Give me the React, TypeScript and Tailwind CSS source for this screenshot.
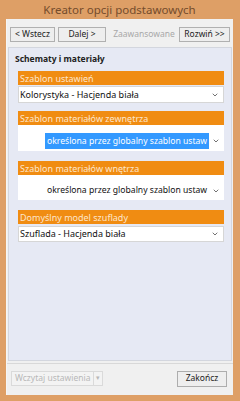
import { ChevronDown } from 'lucide-react'

const font = { fontFamily: '"Noto Sans", "Open Sans", sans-serif' }

function Header({ label }: { label: string }) {
  return (
    <div className="h-[14px] bg-[#f08c12] px-[2px] flex items-center text-[9px] leading-none text-[#fde6cc] whitespace-nowrap">
      {label}
    </div>
  )
}

function Chevron() {
  return <ChevronDown size={8} strokeWidth={2.5} className="text-[#555] shrink-0" />
}

export default function App() {
  return (
    <div className="w-[240px] h-[401px] bg-[#de9f66] flex flex-col pl-[6px] pr-[7px] pb-[6px]" style={font}>
      <div className="h-[19px] flex items-center justify-center text-[11.5px] text-[#744c2c]">
        Kreator opcji podstawowych
      </div>

      <div className="flex-1 bg-[#f0f0f0] flex flex-col border-l border-[#f6f6f6]">
        <div className="h-[28px] flex items-center px-[3px] pt-[2px] text-[8.5px] text-[#222] whitespace-nowrap">
          <button className="w-[45px] h-[15px] border border-[#b0b0b0] bg-[#eeeeee] leading-none">&lt; Wstecz</button>
          <button className="ml-[3px] w-[48px] h-[15px] border border-[#b0b0b0] bg-[#eeeeee] leading-none">Dalej &gt;</button>
          <span className="ml-[7px] w-[62px] text-center text-[#a8a8a8] leading-none">Zaawansowane</span>
          <button className="ml-[4px] w-[51px] h-[15px] border border-[#b0b0b0] bg-[#eeeeee] leading-none">Rozwiń &gt;&gt;</button>
        </div>

        <div className="flex-1 mx-[1px] bg-[#e6e9f4] border border-[#d3d6de] flex flex-col">
          <div className="h-[23px] flex items-center pl-[6px] text-[8.5px] font-bold text-[#222]">
            Schematy i materiały
          </div>

          <div className="ml-[9px] mr-[7px] flex flex-col">
            <Header label="Szablon ustawień" />
            <div className="mt-[1px] h-[17px] bg-white border border-[#d6d6d6] flex items-center pl-[1px] pr-[4px] text-[9px] text-[#111]">
              <span className="flex-1 whitespace-nowrap">Kolorystyka - Hacjenda biała</span>
              <Chevron />
            </div>

            <div className="mt-[8px]">
              <Header label="Szablon materiałów zewnętrza" />
              <div className="h-[26px] bg-white flex items-end pb-[2px] pr-[4px]">
                <div className="flex-1 flex items-center justify-end">
                  <span className="w-[164px] h-[16px] bg-[#3399ff] text-white text-[8.6px] flex items-center pl-[2px] whitespace-nowrap">
                    określona przez globalny szablon ustaw
                  </span>
                  <span className="ml-[3px]"><Chevron /></span>
                </div>
              </div>
            </div>

            <div className="mt-[10px]">
              <Header label="Szablon materiałów wnętrza" />
              <div className="h-[25px] bg-white flex items-end pb-[3px] pr-[4px]">
                <div className="flex-1 flex items-center justify-end text-[8.6px] text-[#111]">
                  <span className="w-[164px] pl-[2px] whitespace-nowrap">określona przez globalny szablon ustaw</span>
                  <span className="ml-[3px]"><Chevron /></span>
                </div>
              </div>
            </div>

            <div className="mt-[10px]">
              <Header label="Domyślny model szuflady" />
              <div className="mt-[2px] h-[16px] bg-white border border-[#d6d6d6] flex items-center pl-[1px] pr-[4px] text-[9px] text-[#111]">
                <span className="flex-1 whitespace-nowrap">Szuflada - Hacjenda biała</span>
                <Chevron />
              </div>
            </div>
          </div>
        </div>

        <div className="h-[32px] border-t border-[#d8d8d8] mt-[2px] flex items-center px-[4px] pb-[2px]">
          <div className="w-[92px] h-[15px] border border-[#dadada] bg-[#f3f3f3] flex items-center text-[8.5px] text-[#b8b8b8] whitespace-nowrap">
            <span className="flex-1 pl-[3px] leading-none">Wczytaj ustawienia</span>
            <span className="w-[9px] h-full border-l border-[#dadada] flex items-center justify-center text-[7px]">▾</span>
          </div>
          <div className="flex-1" />
          <button className="w-[50px] h-[16px] mr-[2px] border border-[#adadad] bg-[#eeeeee] text-[8.5px] text-[#222] leading-none">
            Zakończ
          </button>
        </div>
      </div>
    </div>
  )
}
